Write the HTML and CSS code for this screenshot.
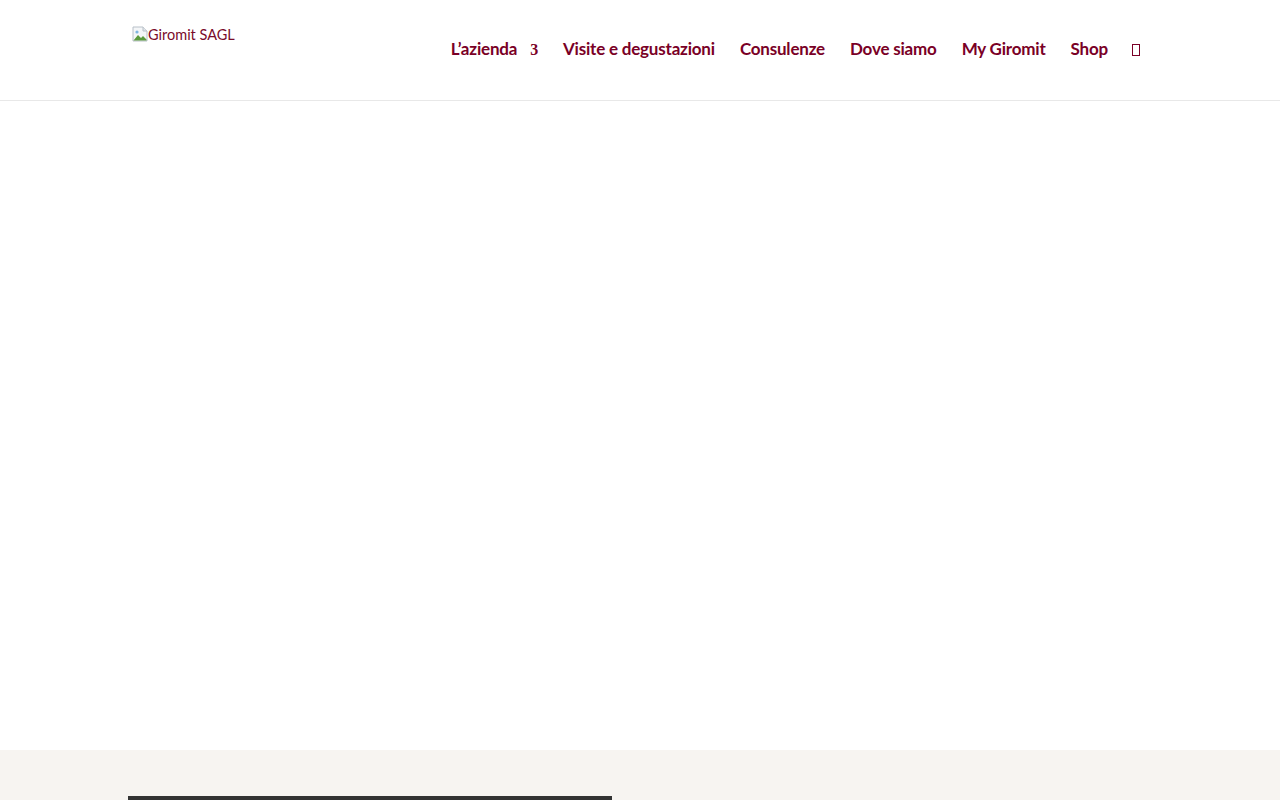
FILE: index.html
```html
<!DOCTYPE html>
<html lang="it">
<head>
    <meta charset="UTF-8">
    <meta name="viewport" content="width=device-width, initial-scale=1.0">
    <title>Giromit SAGL</title>
    <link rel="stylesheet" href="styles.css">
</head>
<body>
    <header class="main-header">
        <div class="container header-row">
            <a class="logo" href="#">
                <svg class="broken-img" width="16" height="16" viewBox="0 0 16 16">
                    <path d="M1 1h10l4 4v10H1z" fill="#f4f6f8" stroke="#b8c0c8" stroke-width="1"/>
                    <path d="M11 1v4h4" fill="#e2e6ea" stroke="#b8c0c8" stroke-width="1"/>
                    <path d="M1.5 14.5 L6 9 L9 12 L11 10 L14.5 13.5 V14.5 Z" fill="#5a9a3c"/>
                    <circle cx="5" cy="6" r="1.6" fill="#7fb6e0"/>
                </svg><span class="alt-text">Giromit SAGL</span>
            </a>
            <nav class="top-menu">
                <a href="#" class="has-sub">L’azienda<span class="arrow">3</span></a>
                <a href="#">Visite e degustazioni</a>
                <a href="#">Consulenze</a>
                <a href="#">Dove siamo</a>
                <a href="#">My Giromit</a>
                <a href="#">Shop</a>
                <span class="search-icon"></span>
            </nav>
        </div>
    </header>

    <main class="page-content"></main>

    <section class="footer-area">
        <div class="container">
            <div class="dark-bar"></div>
        </div>
    </section>
</body>
</html>
```

FILE: styles.css
```css
body {
    margin: 0;
    font-family: 'Lato', 'Open Sans', sans-serif;
    background-color: #fff;
}
.container {
    width: 1024px;
    margin: 0 auto;
}
.main-header {
    height: 101px;
    border-bottom: 1px solid #e8e8e8;
    box-sizing: border-box;
}
.header-row {
    display: flex;
    justify-content: space-between;
    height: 100%;
}
.logo {
    display: flex;
    align-items: flex-start;
    padding-top: 26px;
    padding-left: 4px;
    text-decoration: none;
    color: #7a0b2a;
}
.alt-text {
    font-size: 14.5px;
    line-height: 18px;
}
.top-menu {
    display: flex;
    align-items: center;
    gap: 25px;
    padding-right: 12px;
    padding-bottom: 4px;
}
.top-menu a {
    color: #7a0026;
    font-weight: 700;
    font-size: 17px;
    text-decoration: none;
    letter-spacing: -0.2px;
}
.arrow {
    font-family: 'Liberation Serif', serif;
    font-size: 16px;
    margin-left: 13px;
}
.search-icon {
    display: inline-block;
    width: 6px;
    height: 10px;
    border: 1px solid #7a0026;
    margin-left: -1px;
    margin-top: 4px;
}
.page-content {
    height: 649px;
}
.footer-area {
    background-color: #f7f4f1;
    height: 50px;
    padding-top: 46px;
    box-sizing: border-box;
}
.dark-bar {
    width: 484px;
    height: 4px;
    background-color: #333;
}
```
